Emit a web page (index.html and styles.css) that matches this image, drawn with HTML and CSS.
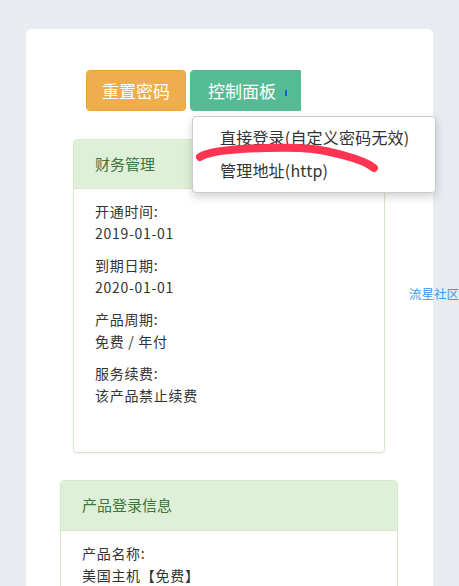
FILE: index.html
```html
<!DOCTYPE html>
<html lang="zh-CN">
<head>
    <meta charset="UTF-8">
    <meta name="viewport" content="width=device-width, initial-scale=1.0">
    <title>产品详情</title>
    <link rel="stylesheet" href="styles.css">
</head>
<body>
    <div class="page">
        <div class="content-card">
            <div class="action-bar">
                <button class="btn btn-warning">重置密码</button>
                <div class="dropdown">
                    <button class="btn btn-panel">控制面板<span class="caret"></span></button>
                    <ul class="dropdown-menu">
                        <li>直接登录(自定义密码无效)</li>
                        <li>管理地址(http)</li>
                    </ul>
                    <svg class="scribble" width="190" height="40" viewBox="0 0 190 40">
                        <path d="M4 20 C 10 16, 30 12, 71 11 S 125 12, 150 19 S 174 29, 178 31" fill="none" stroke="#fe3452" stroke-width="8" stroke-linecap="round"/>
                    </svg>
                </div>
            </div>

            <div class="panel panel-finance">
                <div class="panel-heading">财务管理</div>
                <div class="panel-body">
                    <div class="info-item">
                        <div class="label">开通时间:</div>
                        <div class="value">2019-01-01</div>
                    </div>
                    <div class="info-item">
                        <div class="label">到期日期:</div>
                        <div class="value">2020-01-01</div>
                    </div>
                    <div class="info-item">
                        <div class="label">产品周期:</div>
                        <div class="value">免费 / 年付</div>
                    </div>
                    <div class="info-item">
                        <div class="label">服务续费:</div>
                        <div class="value">该产品禁止续费</div>
                    </div>
                </div>
            </div>

            <div class="panel panel-login">
                <div class="panel-heading">产品登录信息</div>
                <div class="panel-body">
                    <div class="info-item">
                        <div class="label">产品名称:</div>
                        <div class="value">美国主机【免费】</div>
                    </div>
                </div>
            </div>
        </div>
        <a class="side-link" href="#">流星社区</a>
    </div>
</body>
</html>
```

FILE: styles.css
```css
* {
    margin: 0;
    padding: 0;
    box-sizing: border-box;
}

body {
    font-family: "Noto Sans CJK SC", "Noto Sans", sans-serif;
    background-color: #e8ebf0;
    color: #333;
    font-size: 14px;
    overflow: hidden;
}

.page {
    position: relative;
    padding: 29px 0 0 26px;
}

.content-card {
    width: 407px;
    background-color: #fff;
    border-radius: 5px;
    padding-top: 41px;
    min-height: 600px;
}

.action-bar {
    display: flex;
    gap: 4px;
    margin-left: 60px;
}

.btn {
    font-family: inherit;
    font-size: 17px;
    color: #fff;
    border: 1px solid transparent;
    height: 41px;
    cursor: pointer;
}

.btn-warning {
    width: 100px;
    background-color: #f0ad4e;
    border-color: #eea236;
    border-radius: 4px;
}

.btn-panel {
    width: 111px;
    background-color: #55bb95;
    border-color: #55bb95;
    border-radius: 4px 0 0 4px;
    text-align: left;
    padding-left: 17px;
}

.caret {
    display: inline-block;
    width: 2px;
    height: 6px;
    background-color: #1a62d0;
    margin-left: 9px;
    vertical-align: middle;
}

.dropdown {
    position: relative;
}

.dropdown-menu {
    position: absolute;
    top: 46px;
    left: 2px;
    width: 244px;
    list-style: none;
    background-color: #fff;
    border: 1px solid #ccc;
    border-radius: 4px;
    box-shadow: 0 4px 10px rgba(0, 0, 0, 0.18);
    padding: 4px 0 5px;
    z-index: 2;
}

.dropdown-menu li {
    font-size: 16px;
    letter-spacing: 0.2px;
    line-height: 33px;
    padding-left: 27px;
    color: #333;
    white-space: nowrap;
}

.scribble {
    position: absolute;
    left: 6px;
    top: 67px;
    z-index: 3;
}

.panel {
    border: 1px solid #d6e9c6;
    border-radius: 4px;
    box-shadow: 0 1px 2px rgba(0, 0, 0, 0.06);
}

.panel-heading {
    background-color: #dff0d8;
    color: #3c763d;
    font-size: 15px;
    border-bottom: 1px solid #d6e9c6;
    border-radius: 3px 3px 0 0;
}

.panel-body {
    letter-spacing: 0.7px;
}

.panel-finance {
    width: 312px;
    margin: 28px 0 0 47px;
}

.panel-finance .panel-heading {
    height: 49px;
    line-height: 47px;
    padding-left: 21px;
}

.panel-finance .panel-body {
    height: 263px;
    padding: 11px 0 0 21px;
}

.panel-login {
    width: 338px;
    margin: 27px 0 0 34px;
}

.panel-login .panel-heading {
    height: 50px;
    line-height: 47px;
    padding-left: 21px;
}

.panel-login .panel-body {
    padding: 11px 0 0 21px;
}

.info-item {
    line-height: 22px;
    margin-bottom: 10px;
}

.side-link {
    position: absolute;
    top: 284px;
    left: 409px;
    font-size: 12.5px;
    color: #3a9bf0;
    text-decoration: none;
}
```
